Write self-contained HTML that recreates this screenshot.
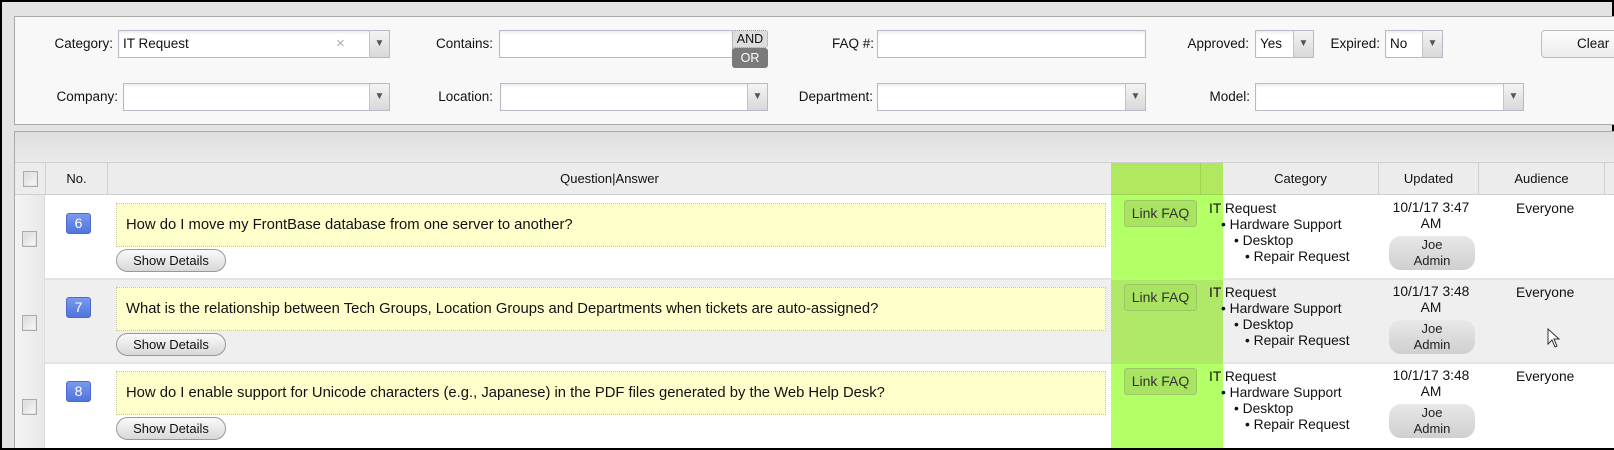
<!DOCTYPE html>
<html><head><meta charset="utf-8"><style>
*{box-sizing:border-box;margin:0;padding:0}
body{width:1614px;height:450px;background:#000;font-family:"Liberation Sans",sans-serif;font-size:13px;color:#111;position:relative;overflow:hidden}
.a{position:absolute}
#frame{left:2px;top:2px;width:1610px;height:446px;background:#e3e3e3}
.panel{background:#f8f8f8;border:1px solid #a9a9a9}
.lbl{font-size:13.5px;color:#111;line-height:28px;text-align:right}
.inp{background:#fff;border:1px solid #b8b8c8;box-shadow:inset 0 2px 2px #eee;height:28px;line-height:26px;padding-left:4px;font-size:13.5px}
.arr{position:absolute;right:0;top:0;width:20px;height:26px;background:linear-gradient(#f4f4f4,#d8d8d8);border-left:1px solid #c4c4c4;color:#555;font-size:10px;text-align:center;line-height:26px}
.hd{background:#ececec;border-bottom:1px solid #cfcfcf;text-align:center;line-height:32px;font-size:13px}
.cb{width:15px;height:16px;border:1px solid #aaa;background:linear-gradient(135deg,#d8d8d8,#fafafa);box-shadow:inset 0 0 0 1px #e4e4e4}
.badge{width:25px;height:21px;background:linear-gradient(#7a99ef,#4f74dc);border:1px solid #4b6bd0;border-radius:3px;color:#fff;text-align:center;line-height:19px;font-size:14px}
.q{background:#ffffcc;border:1px dotted #c8c8a0;height:44px;line-height:42px;padding-left:9px;font-size:14.8px;color:#111}
.sd{width:110px;height:23px;border:1px solid #999;border-radius:12px;background:linear-gradient(#fafafa,#d8d8d8);text-align:center;line-height:21px;font-size:13px}
.lf{width:73px;height:27px;border:1px solid #9bc865;border-radius:3px;background:#a9e362;text-align:center;line-height:25px;font-size:14px;color:#333}
.cat{font-size:13.8px;line-height:16px}
.upd{width:100px;text-align:center;font-size:13.8px;line-height:16px}
.ja{width:86px;height:34px;border-radius:12px;background:linear-gradient(#e8e8e8,#cfcfcf);text-align:center;font-size:13px;line-height:16px;padding-top:1px;color:#222}
.ev{font-size:13.8px}
</style></head><body>
<div id="frame" class="a"></div>
<div class="a panel" style="left:14px;top:16px;width:1605px;height:109px"></div>
<div class="a lbl" style="left:30px;top:30px;width:83px">Category:</div>
<div class="a inp" style="left:118px;top:30px;width:272px">IT Request<span style="position:absolute;left:217px;color:#aab;font-size:15px">×</span><div class="arr">&#9660;</div></div>
<div class="a lbl" style="left:400px;top:30px;width:93px">Contains:</div>
<div class="a inp" style="left:499px;top:30px;width:234px"></div>
<div class="a" style="left:732px;top:30px;width:36px;height:18px;background:#ddd;border:1px dotted #999;border-radius:3px;text-align:center;font-size:12.5px;line-height:16px;color:#111">AND</div>
<div class="a" style="left:732px;top:48px;width:36px;height:20px;background:#7a7a7a;border-radius:3px;text-align:center;font-size:12.5px;line-height:20px;color:#fff">OR</div>
<div class="a lbl" style="left:780px;top:30px;width:94px">FAQ #:</div>
<div class="a inp" style="left:877px;top:30px;width:269px"></div>
<div class="a lbl" style="left:1160px;top:30px;width:89px">Approved:</div>
<div class="a inp" style="left:1255px;top:30px;width:59px">Yes<div class="arr">&#9660;</div></div>
<div class="a lbl" style="left:1320px;top:30px;width:60px">Expired:</div>
<div class="a inp" style="left:1385px;top:30px;width:58px">No<div class="arr">&#9660;</div></div>
<div class="a" style="left:1541px;top:30px;width:80px;height:28px;border:1px solid #bbb;border-radius:4px;background:linear-gradient(#fcfcfc,#ececec);line-height:26px;padding-left:35px;font-size:13.5px">Clear</div>
<div class="a lbl" style="left:30px;top:83px;width:88px">Company:</div>
<div class="a inp" style="left:123px;top:83px;width:267px"><div class="arr">&#9660;</div></div>
<div class="a lbl" style="left:400px;top:83px;width:93px">Location:</div>
<div class="a inp" style="left:500px;top:83px;width:268px"><div class="arr">&#9660;</div></div>
<div class="a lbl" style="left:770px;top:83px;width:103px">Department:</div>
<div class="a inp" style="left:877px;top:83px;width:269px"><div class="arr">&#9660;</div></div>
<div class="a lbl" style="left:1180px;top:83px;width:70px">Model:</div>
<div class="a inp" style="left:1255px;top:83px;width:269px"><div class="arr">&#9660;</div></div>

<div class="a" style="left:14px;top:131px;width:1605px;height:317px;background:#fff;border-left:1px solid #a9a9a9;border-top:1px solid #a9a9a9"></div>
<div class="a" style="left:15px;top:132px;width:1600px;height:31px;background:linear-gradient(#dedede,#eaeaea);border-bottom:1px solid #cfcfcf"></div>
<div class="a hd" style="left:15px;top:163px;width:31px;height:32px;border-right:1px solid #d0d0d0"><div class="cb" style="margin:8px auto"></div></div>
<div class="a hd" style="left:46px;top:163px;width:62px;height:32px;border-right:1px solid #d0d0d0">No.</div>
<div class="a hd" style="left:108px;top:163px;width:1003px;height:32px">Question|Answer</div>
<div class="a hd" style="left:1111px;top:163px;width:112px;height:32px;background:#b0e860;border-bottom-color:#9fd450"><div class="a" style="left:89px;top:0;width:1px;height:31px;background:#9fd450"></div></div>
<div class="a hd" style="left:1223px;top:163px;width:156px;height:32px;border-right:1px solid #d0d0d0">Category</div>
<div class="a hd" style="left:1379px;top:163px;width:100px;height:32px;border-right:1px solid #d0d0d0">Updated</div>
<div class="a hd" style="left:1479px;top:163px;width:126px;height:32px;border-right:1px solid #d0d0d0">Audience</div>
<div class="a hd" style="left:1605px;top:163px;width:10px;height:32px"></div>

<div class="a" style="left:15px;top:195px;width:1600px;height:85px;background:#fff;border-bottom:2px solid #e4e4e4"></div>
<div class="a" style="left:15px;top:280px;width:1600px;height:84px;background:#efefef;border-bottom:2px solid #e4e4e4"></div>
<div class="a" style="left:15px;top:364px;width:1600px;height:84px;background:#fff"></div>
<div class="a" style="left:15px;top:195px;width:30px;height:253px;background:linear-gradient(90deg,#f4f4f4,#e8e8e8);border-right:1px solid #ddd"></div>
<div class="a" style="left:1111px;top:195px;width:112px;height:85px;background:#b3ff66"></div>
<div class="a" style="left:1111px;top:280px;width:112px;height:84px;background:#b0e868"></div>
<div class="a" style="left:1111px;top:364px;width:112px;height:84px;background:#b3ff66"></div>

<div class="a cb" style="left:22px;top:231px"></div>
<div class="a cb" style="left:22px;top:315px"></div>
<div class="a cb" style="left:22px;top:399px"></div>
<div class="a badge" style="left:66px;top:213px">6</div>
<div class="a badge" style="left:66px;top:297px">7</div>
<div class="a badge" style="left:66px;top:381px">8</div>
<div class="a q" style="left:116px;top:203px;width:990px">How do I move my FrontBase database from one server to another?</div>
<div class="a q" style="left:116px;top:287px;width:990px">What is the relationship between Tech Groups, Location Groups and Departments when tickets are auto-assigned?</div>
<div class="a q" style="left:116px;top:371px;width:990px">How do I enable support for Unicode characters (e.g., Japanese) in the PDF files generated by the Web Help Desk?</div>
<div class="a sd" style="left:116px;top:249px">Show Details</div>
<div class="a sd" style="left:116px;top:333px">Show Details</div>
<div class="a sd" style="left:116px;top:417px">Show Details</div>
<div class="a lf" style="left:1124px;top:200px">Link FAQ</div>
<div class="a lf" style="left:1124px;top:284px">Link FAQ</div>
<div class="a lf" style="left:1124px;top:368px">Link FAQ</div>

<div class="a cat" style="left:1209px;top:201px">IT Request<br><span style="padding-left:12px">• Hardware Support</span><br><span style="padding-left:25px">• Desktop</span><br><span style="padding-left:36px">• Repair Request</span></div>
<div class="a cat" style="left:1209px;top:285px">IT Request<br><span style="padding-left:12px">• Hardware Support</span><br><span style="padding-left:25px">• Desktop</span><br><span style="padding-left:36px">• Repair Request</span></div>
<div class="a cat" style="left:1209px;top:369px">IT Request<br><span style="padding-left:12px">• Hardware Support</span><br><span style="padding-left:25px">• Desktop</span><br><span style="padding-left:36px">• Repair Request</span></div>

<div class="a upd" style="left:1381px;top:200px">10/1/17 3:47<br>AM</div>
<div class="a upd" style="left:1381px;top:284px">10/1/17 3:48<br>AM</div>
<div class="a upd" style="left:1381px;top:368px">10/1/17 3:48<br>AM</div>
<div class="a ja" style="left:1389px;top:236px">Joe<br>Admin</div>
<div class="a ja" style="left:1389px;top:320px">Joe<br>Admin</div>
<div class="a ja" style="left:1389px;top:404px">Joe<br>Admin</div>
<div class="a ev" style="left:1516px;top:201px">Everyone</div>
<div class="a ev" style="left:1516px;top:285px">Everyone</div>
<div class="a ev" style="left:1516px;top:369px">Everyone</div>
<svg class="a" style="left:1547px;top:328px" width="14" height="20" viewBox="0 0 14 20"><path d="M1 1 L1 16 L5 12 L8 19 L10 18 L7 11 L12 11 Z" fill="#fff" stroke="#333" stroke-width="1"/></svg>
<div class="a" style="left:0;top:448px;width:1614px;height:2px;background:#000"></div>
</body></html>
